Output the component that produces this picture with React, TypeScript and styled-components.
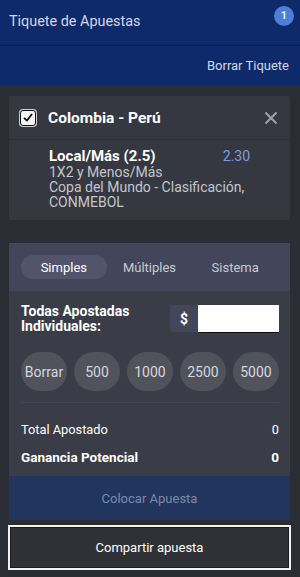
import React, { useState } from 'react';
import styled, { createGlobalStyle } from 'styled-components';

const GlobalStyle = createGlobalStyle`
  body {
    margin: 0;
    background: #2b2d34;
    font-family: Roboto, 'Liberation Sans', sans-serif;
  }
`;

const Page = styled.div`
  width: 300px;
  height: 577px;
  background: #2b2d34;
  overflow: hidden;
`;

const Header = styled.div`
  height: 46px;
  background: #0f2a6b;
  border-bottom: 1px solid #0a1e52;
  display: flex;
  align-items: center;
  justify-content: space-between;
  padding: 0 6px 0 9px;
  box-sizing: border-box;
  color: #d3d7e6;
  font-size: 14.4px;
`;

const Title = styled.span`
  margin-top: -3px;
`;

const Badge = styled.span`
  width: 20px;
  height: 20px;
  border-radius: 50%;
  background: #4b7fd9;
  color: #e6ecf8;
  font-size: 11px;
  font-weight: 700;
  display: flex;
  align-items: center;
  justify-content: center;
  margin-top: -14px;
`;

const SubHeader = styled.div`
  height: 39px;
  background: #0f2a6b;
  display: flex;
  align-items: center;
  justify-content: flex-end;
  padding: 0 11px;
  color: #d3d7e6;
  font-size: 13px;
`;

const Body = styled.div`
  padding: 11px 10px 0 9px;
  display: flex;
  flex-direction: column;
`;

const Card = styled.div`
  background: #363841;
  border-radius: 2px;
`;

const CardHeader = styled.div`
  height: 43px;
  display: flex;
  align-items: center;
  padding: 0 12px 0 11px;
  border-bottom: 1px solid #2c2e35;
`;

const Checkbox = styled.span`
  width: 14px;
  height: 14px;
  border: 1.5px solid #111;
  border-radius: 3px;
  background: #f4f4f4;
  display: flex;
  align-items: center;
  justify-content: center;
  box-shadow: 0 0 0 1px #cfcfcf;
`;

const MatchName = styled.span`
  flex: 1;
  margin-left: 12px;
  color: #fff;
  font-size: 15.5px;
  font-weight: 700;
`;

const CloseButton = styled.button`
  background: none;
  border: none;
  padding: 0;
  display: flex;
  cursor: pointer;
`;

const Selection = styled.div`
  height: 80px;
  box-sizing: border-box;
  padding: 7px 40px 0 40px;
  display: grid;
  grid-template-columns: 1fr auto;
  align-content: start;
`;

const Pick = styled.span`
  color: #fff;
  font-size: 15px;
  font-weight: 700;
  line-height: 18px;
`;

const Odds = styled.span`
  color: #7f9de0;
  font-size: 14px;
  line-height: 18px;
`;

const Info = styled.span`
  grid-column: 1 / -1;
  color: #c4c6cc;
  font-size: 14px;
  line-height: 15px;
`;

const SlipCard = styled.div`
  margin-top: 23px;
  background: #3a3c47;
`;

const Tabs = styled.div`
  height: 48px;
  background: #43465a;
  display: grid;
  grid-template-columns: repeat(3, 1fr);
  align-items: center;
  padding: 0 12px;
`;

const Tab = styled.button<{ $active?: boolean }>`
  height: 24px;
  border: none;
  border-radius: 12px;
  background: ${(p) => (p.$active ? '#51546b' : 'transparent')};
  color: ${(p) => (p.$active ? '#fff' : '#c8cad4')};
  font-family: inherit;
  font-size: 13px;
  cursor: pointer;
`;

const SlipContent = styled.div`
  padding: 14px 11px 0 12px;
`;

const StakeRow = styled.div`
  height: 27px;
  display: flex;
  align-items: center;
  justify-content: space-between;
`;

const StakeLabel = styled.span`
  color: #fff;
  font-size: 14px;
  font-weight: 700;
  line-height: 15px;
`;

const StakeInput = styled.div`
  display: flex;
  height: 27px;
`;

const Currency = styled.span`
  width: 28px;
  background: #43465a;
  color: #fff;
  font-size: 14px;
  font-weight: 700;
  display: flex;
  align-items: center;
  justify-content: center;
  border-radius: 2px 0 0 2px;
`;

const Input = styled.input`
  width: 81px;
  border: none;
  outline: none;
  padding: 0;
  background: #fff;
  box-shadow: 0 1px 0 #111;
`;

const Chips = styled.div`
  margin-top: 20px;
  display: flex;
  justify-content: space-between;
  padding-bottom: 11px;
  border-bottom: 1px solid #444752;
`;

const Chip = styled.button`
  width: 46px;
  height: 39px;
  border: none;
  border-radius: 20px;
  background: #50525c;
  color: #d6d7dc;
  font-family: inherit;
  font-size: 14px;
  padding: 0;
  cursor: pointer;
`;

const Summary = styled.div`
  height: 73px;
  box-sizing: border-box;
  padding-top: 19px;
  display: flex;
  flex-direction: column;
  gap: 11px;
`;

const SummaryRow = styled.div<{ $strong?: boolean }>`
  display: flex;
  justify-content: space-between;
  color: #fff;
  font-size: ${(p) => (p.$strong ? '13.5px' : '12.8px')};
  font-weight: ${(p) => (p.$strong ? 700 : 400)};
  line-height: 16px;
`;

const PlaceButton = styled.button`
  width: 100%;
  height: 44px;
  border: none;
  background: #22355f;
  color: #7c89a6;
  font-family: inherit;
  font-size: 13px;
  display: block;
`;

const ShareButton = styled.button`
  margin: 5px 0 0 -1px;
  width: 283px;
  height: 45px;
  border: 2px solid #f2f2f2;
  box-shadow: inset 0 0 0 1px #1a1b1f;
  background: #2f3137;
  color: #fff;
  font-family: inherit;
  font-size: 13px;
  cursor: pointer;
`;

const stakes = ['Borrar', '500', '1000', '2500', '5000'];
const tabs = ['Simples', 'Múltiples', 'Sistema'];

export default function App() {
  const [tab, setTab] = useState(0);

  return (
    <Page>
      <GlobalStyle />
      <Header>
        <Title>Tiquete de Apuestas</Title>
        <Badge>1</Badge>
      </Header>
      <SubHeader>Borrar Tiquete</SubHeader>
      <Body>
        <Card>
          <CardHeader>
            <Checkbox>
              <svg width="10" height="9" viewBox="0 0 10 9">
                <path d="M1 5 L4 7.5 L9 1" fill="none" stroke="#111" strokeWidth="1.8" />
              </svg>
            </Checkbox>
            <MatchName>Colombia - Perú</MatchName>
            <CloseButton>
              <svg width="14" height="14" viewBox="0 0 14 14">
                <path d="M1.5 1.5 L12.5 12.5 M12.5 1.5 L1.5 12.5" stroke="#9c9ea5" strokeWidth="2.2" />
              </svg>
            </CloseButton>
          </CardHeader>
          <Selection>
            <Pick>Local/Más (2.5)</Pick>
            <Odds>2.30</Odds>
            <Info>1X2 y Menos/Más</Info>
            <Info>Copa del Mundo - Clasificación,</Info>
            <Info>CONMEBOL</Info>
          </Selection>
        </Card>
        <SlipCard>
          <Tabs>
            {tabs.map((t, i) => (
              <Tab key={t} $active={tab === i} onClick={() => setTab(i)}>
                {t}
              </Tab>
            ))}
          </Tabs>
          <SlipContent>
            <StakeRow>
              <StakeLabel>
                Todas Apostadas
                <br />
                Individuales:
              </StakeLabel>
              <StakeInput>
                <Currency>$</Currency>
                <Input />
              </StakeInput>
            </StakeRow>
            <Chips>
              {stakes.map((s) => (
                <Chip key={s}>{s}</Chip>
              ))}
            </Chips>
            <Summary>
              <SummaryRow>
                <span>Total Apostado</span>
                <span>0</span>
              </SummaryRow>
              <SummaryRow $strong>
                <span>Ganancia Potencial</span>
                <span>0</span>
              </SummaryRow>
            </Summary>
          </SlipContent>
          <PlaceButton>Colocar Apuesta</PlaceButton>
        </SlipCard>
        <ShareButton>Compartir apuesta</ShareButton>
      </Body>
    </Page>
  );
}
